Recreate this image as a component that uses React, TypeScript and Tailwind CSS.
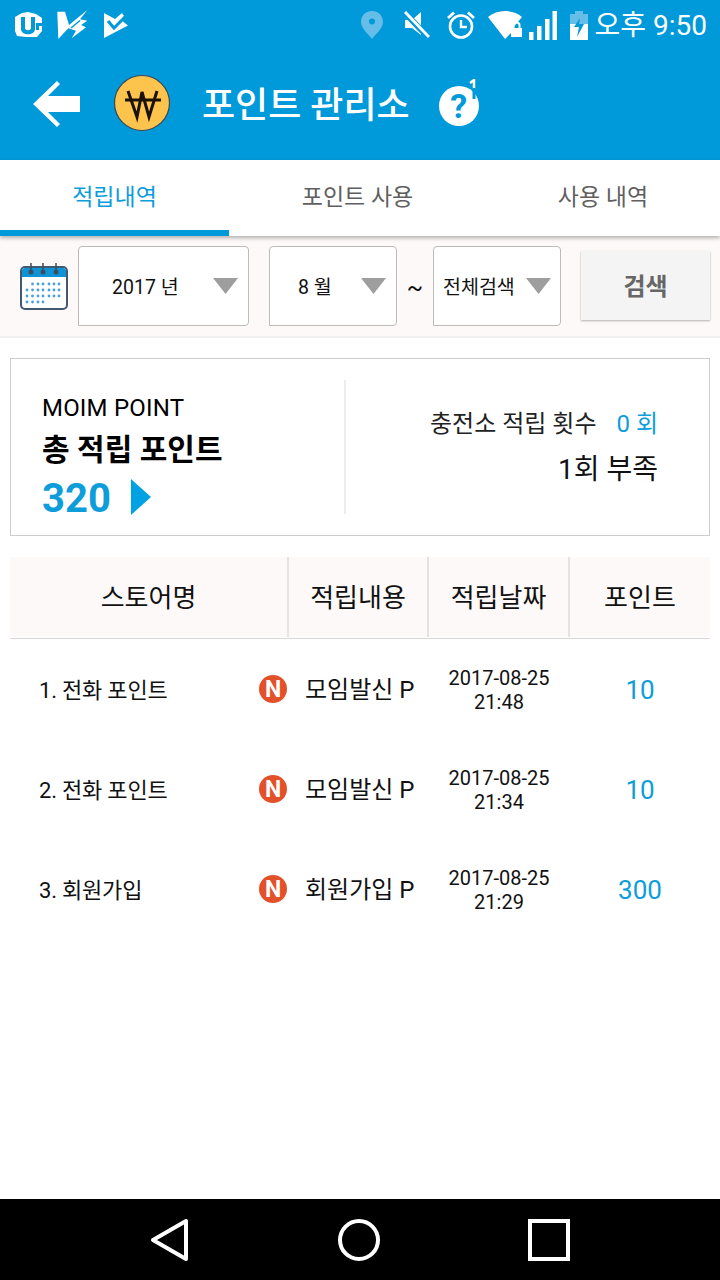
import React from "react";

const font = { fontFamily: '"Roboto","Noto Sans CJK KR",sans-serif' };

function StatusLeft() {
  return (
    <div className="flex items-center gap-[16px] pl-[14px]">
      <svg width="29" height="28" viewBox="0 0 29 28">
        <path d="M8 2 L14 1 L22 3 L28 7 L28 20 L23 26 L12 26 L3 25 L1 20 L1 6 Z" fill="#fff" />
        <path d="M7 6 H11 V17 C11 20 17 20 17 17 V6 H21 V18 C21 25 7 25 7 18 Z" fill="#0099d9" />
        <path d="M22 12 H28 V15 H25 V19 H22 Z" fill="#0099d9" />
      </svg>
      <svg width="31" height="30" viewBox="0 0 31 30" className="-ml-[2px]">
        <path d="M0.300 1.700 L8 1.700 L12 15 L30.300 0 L23 9.300 L30.300 10.700 L24 15 L29 17.300 L14.700 28.300 L19 20.700 L11.300 18.300 L1.300 29 Z" fill="#fff" />
        <path d="M14 18 L23 10.500" stroke="#0099d9" strokeWidth="1.500" />
      </svg>
      <svg width="24" height="26" viewBox="0 0 24 26" className="mt-[1px]">
        <path d="M0 0 L11 6 L18 0 L20 3 L17 7 L24 12.500 L0 25 Z" fill="#fff" />
        <path d="M4 8 L10 15 L21 4" fill="none" stroke="#0099d9" strokeWidth="3" />
      </svg>
    </div>
  );
}

function StatusRight() {
  return (
    <div className="flex items-center pr-[13px] text-white">
      <svg width="24" height="30" viewBox="0 0 24 30" className="mr-[20px]">
        <path d="M12 1 C5 1 1 6 1 12 C1 18 8 24 12 29 C16 24 23 18 23 12 C23 6 19 1 12 1 Z" fill="#66bde8" />
        <circle cx="12" cy="11.500" r="3" fill="#0099d9" />
      </svg>
      <svg width="26" height="28" viewBox="0 0 26 28" className="mr-[17px]">
        <path d="M1 9 H8 L17 1 V24 L8 17 H1 Z" fill="#fff" />
        <path d="M1 2 L24 26" stroke="#0099d9" strokeWidth="6" />
        <path d="M1 1 L25 26" stroke="#fff" strokeWidth="3" />
      </svg>
      <svg width="28" height="30" viewBox="0 0 28 30" className="mr-[13px]">
        <circle cx="14" cy="16.500" r="11" fill="none" stroke="#fff" strokeWidth="2.600" />
        <path d="M14 10 V17 H20" fill="none" stroke="#fff" strokeWidth="2.400" />
        <path d="M1 8 L7 2.500 M27 8 L21 2.500" stroke="#fff" strokeWidth="2.800" />
      </svg>
      <svg width="36" height="30" viewBox="0 0 36 30" className="mr-[5px]">
        <path d="M0 7 C9 -1 25 -1 34 7 L24 19 V22 L17 29 Z" fill="#fff" />
        <rect x="23" y="18" width="11" height="9" fill="#fff" />
        <path d="M25.500 18 V15 C25.500 11.500 31.500 11.500 31.500 15 V18" fill="none" stroke="#fff" strokeWidth="2" />
      </svg>
      <svg width="28" height="29" viewBox="0 0 28 29" className="mr-[13px]">
        <rect x="0" y="21" width="4.500" height="8" fill="#fff" />
        <rect x="8" y="15" width="4.500" height="14" fill="#fff" />
        <rect x="16" y="8" width="4.500" height="21" fill="#fff" />
        <rect x="23.500" y="0" width="4.500" height="29" fill="#fff" />
      </svg>
      <svg width="18" height="29" viewBox="0 0 18 29" className="mr-[7px]">
        <path d="M5 0 H13 V3 H18 V13 H0 V3 H5 Z" fill="#66bde8" />
        <rect x="0" y="13" width="18" height="16" fill="#fff" />
        <path d="M10 7 L4 16 H9 L7 26 L14 13 H9 Z" fill="#0099d9" />
      </svg>
      <span className="text-[28px] leading-[50px] pt-[2px] font-normal whitespace-nowrap">오후 9:50</span>
    </div>
  );
}

function Caret({ className = "" }: { className?: string }) {
  return (
    <svg width="25" height="16" viewBox="0 0 25 16" className={className}>
      <path d="M0 0 H25 L12.500 16 Z" fill="#9e9e9e" />
    </svg>
  );
}

function Select({ label, w, textClass, caretClass }: { label: string; w: string; textClass: string; caretClass: string }) {
  return (
    <div className={`relative h-[80px] ${w} bg-white border border-[#bdbbb9] rounded-[4px] rounded-bl-none flex items-center text-[19.500px] text-[#111] ${textClass}`}>
      <span className="whitespace-nowrap pt-[3px]">{label}</span>
      <Caret className={caretClass} />
    </div>
  );
}

function Row({ name, type, date, time, pts }: { name: string; type: string; date: string; time: string; pts: string }) {
  return (
    <div className="flex h-[100px] items-center text-[#111]">
      <div className="w-[259px] pl-[39px] pt-[2px] text-[22px] tracking-[-0.200px] whitespace-nowrap">{name}</div>
      <div className="w-[28px] h-[28px] rounded-full bg-[#e2512a] flex items-center justify-center text-white font-bold text-[23px] leading-none">N</div>
      <div className="w-[141px] pl-[18px] pt-[1px] text-[24px] whitespace-nowrap">{type}</div>
      <div className="w-[142px] pt-[2px] text-center text-[20px] leading-[24px]">
        <div>{date}</div>
        <div>{time}</div>
      </div>
      <div className="w-[140px] pt-[2px] text-center text-[26px] text-[#0d9ddb]">{pts}</div>
    </div>
  );
}

export default function App() {
  return (
    <div style={font} className="w-[720px] h-[1280px] bg-white flex flex-col overflow-hidden">
      <div className="h-[160px] bg-[#0099d9] flex flex-col shrink-0">
        <div className="h-[50px] flex items-center justify-between">
          <StatusLeft />
          <StatusRight />
        </div>
        <div className="h-[110px] flex items-center pb-[5px]">
          <svg width="48" height="48" viewBox="0 0 48 48" className="ml-[32px] mt-[3px]">
            <path d="M1 24 L25 1 L28 4 L16 16 H48 V32 H16 L28 44 L25 47 Z" fill="#fff" />
          </svg>
          <svg width="58" height="58" viewBox="0 0 58 58" className="ml-[33px] mt-[1px]">
            <circle cx="29" cy="29" r="27.500" fill="#fcc44c" stroke="#3a4a55" strokeWidth="1.200" />
            <path d="M15 17 L24 43 L29 18 L36 43 L44 17" fill="none" stroke="#1a1208" strokeWidth="3" />
            <path d="M12 26 H48" stroke="#1a1208" strokeWidth="3" />
          </svg>
          <span className="ml-[31px] mt-[6px] text-white text-[36px] font-medium whitespace-nowrap">포인트 관리소</span>
          <div className="relative ml-[29px] w-[40px] h-[40px] rounded-full bg-white flex items-center justify-center text-[#0099d9] text-[34px] font-bold leading-none mt-[7px]">
            ?
            <svg width="12" height="24" viewBox="0 0 12 24" className="absolute left-[28px] -top-[7px]">
              <path d="M3 4 L7 1 V10" fill="none" stroke="#fff" strokeWidth="2.500" />
              <path d="M7 9 V20" fill="none" stroke="#0099d9" strokeWidth="3" />
            </svg>
          </div>
        </div>
      </div>

      <div className="relative z-10 h-[76px] bg-white flex shrink-0 shadow-[0_2px_4px_rgba(0,0,0,0.3)]">
        <div className="w-[229px] h-[76px] border-b-[6px] border-[#0099d9] flex items-center justify-center pt-[6px] text-[23px] text-[#0d9ddb]">적립내역</div>
        <div className="w-[257px] flex items-center justify-center text-[23px] text-[#5f5f5f]">포인트 사용</div>
        <div className="w-[234px] flex items-center justify-center text-[23px] text-[#5f5f5f]">사용 내역</div>
      </div>

      <div className="h-[102px] bg-[#fdf9f8] border-b-2 border-[#f1f0ef] flex items-start pt-[10px] shrink-0">
        <svg width="48" height="48" viewBox="0 0 48 48" className="ml-[20px] mt-[16px] shrink-0">
          <rect x="1" y="5" width="46" height="42" rx="4" fill="#fff" stroke="#42596f" strokeWidth="2" />
          <path d="M2 15 V9 Q2 6 5 6 H43 Q46 6 46 9 V15 Z" fill="#0d93d6" />
          {[11, 23, 36].map((x) => (
            <g key={x}>
              <path d={`M${x} 1 V10`} stroke="#3d4d5c" strokeWidth="1.500" />
              <circle cx={x} cy="10" r="2.500" fill="#3d4d5c" />
            </g>
          ))}
          {[22, 28, 34, 40].map((y, r) =>
            [7, 12.5, 18, 23, 29, 34, 39].slice(0, r === 3 ? 4 : 7).map((x) =>
              r === 0 && x === 7 ? null : <circle key={`${x}-${y}`} cx={x} cy={y} r="1.400" fill="#4a9fe0" />
            )
          )}
        </svg>
        <Select label="2017 년" w="w-[171px] ml-[10px] shrink-0" textClass="pl-[33px]" caretClass="absolute left-[134px] top-[31px]" />
        <Select label="8 월" w="w-[128px] ml-[20px] shrink-0" textClass="pl-[28px]" caretClass="absolute left-[91px] top-[31px]" />
        <span className="w-[36px] pt-[2px] shrink-0 text-center text-[24px] text-[#111] leading-[80px]">~</span>
        <Select label="전체검색" w="w-[128px] shrink-0" textClass="pl-[9px]" caretClass="absolute left-[92px] top-[31px]" />
        <div className="ml-[20px] mt-[5px] w-[129px] h-[69px] bg-[#f4f4f4] shadow-[0_1px_2px_rgba(0,0,0,0.3)] flex items-center justify-center pt-[2px] text-[24px] font-bold text-[#666] shrink-0">검색</div>
      </div>

      <div className="mx-[10px] mt-[20px] h-[178px] border border-[#cccccc] flex items-center shrink-0">
        <div className="w-[335px] h-[134px] border-r-2 border-[#ececec] pl-[31px] text-black shrink-0 flex flex-col">
          <div className="text-[24px] leading-[28px] mt-[14px] tracking-[0.200px]">MOIM POINT</div>
          <div className="text-[30px] leading-[38px] font-bold mt-[9px] whitespace-nowrap">총 적립 포인트</div>
          <div className="flex items-center mt-[12px] h-[36px]">
            <span className="text-[40px] leading-[36px] font-bold text-[#0d9ddb]">320</span>
            <svg width="20" height="36" viewBox="0 0 20 36" className="ml-[20px] -mt-[4px]">
              <path d="M0 0 L20 18 L0 36 Z" fill="#00a2e4" />
            </svg>
          </div>
        </div>
        <div className="flex-1 pr-[51px] flex flex-col items-end">
          <div className="text-[24px] leading-[30px] text-[#222] whitespace-nowrap mt-[3px]">
            충전소 적립 횟수<span className="text-[#0d9ddb] ml-[20px]">0 회</span>
          </div>
          <div className="text-[28px] leading-[36px] text-[#111] mt-[13px] whitespace-nowrap">1회 부족</div>
        </div>
      </div>

      <div className="mx-[10px] mt-[21px] h-[82px] border-b border-[#d8d8d8] flex bg-white shrink-0">
        <div className="w-full h-[80px] bg-[#fdf9f8] flex text-[26px] text-[#111]">
          <div className="w-[279px] pt-[2px] border-r-2 border-[#e3e3e3] flex items-center justify-center">스토어명</div>
          <div className="w-[140px] pt-[2px] border-r-2 border-[#e3e3e3] flex items-center justify-center">적립내용</div>
          <div className="w-[141px] pt-[2px] border-r-2 border-[#e3e3e3] flex items-center justify-center">적립날짜</div>
          <div className="flex-1 pt-[2px] flex items-center justify-center">포인트</div>
        </div>
      </div>

      <div className="flex-1">
        <Row name="1. 전화 포인트" type="모임발신 P" date="2017-08-25" time="21:48" pts="10" />
        <Row name="2. 전화 포인트" type="모임발신 P" date="2017-08-25" time="21:34" pts="10" />
        <Row name="3. 회원가입" type="회원가입 P" date="2017-08-25" time="21:29" pts="300" />
      </div>

      <div className="h-[81px] bg-black flex items-center shrink-0 relative">
        <svg width="40" height="44" viewBox="0 0 40 44" className="ml-[150px]">
          <path d="M36 3 V41 L3 22 Z" fill="none" stroke="#fff" strokeWidth="4" strokeLinejoin="round" />
        </svg>
        <svg width="44" height="44" viewBox="0 0 44 44" className="ml-[147px]">
          <circle cx="22" cy="22" r="19" fill="none" stroke="#fff" strokeWidth="4" />
        </svg>
        <svg width="42" height="42" viewBox="0 0 42 42" className="ml-[147px]">
          <rect x="2" y="2" width="38" height="38" fill="none" stroke="#fff" strokeWidth="4" />
        </svg>
      </div>
    </div>
  );
}
